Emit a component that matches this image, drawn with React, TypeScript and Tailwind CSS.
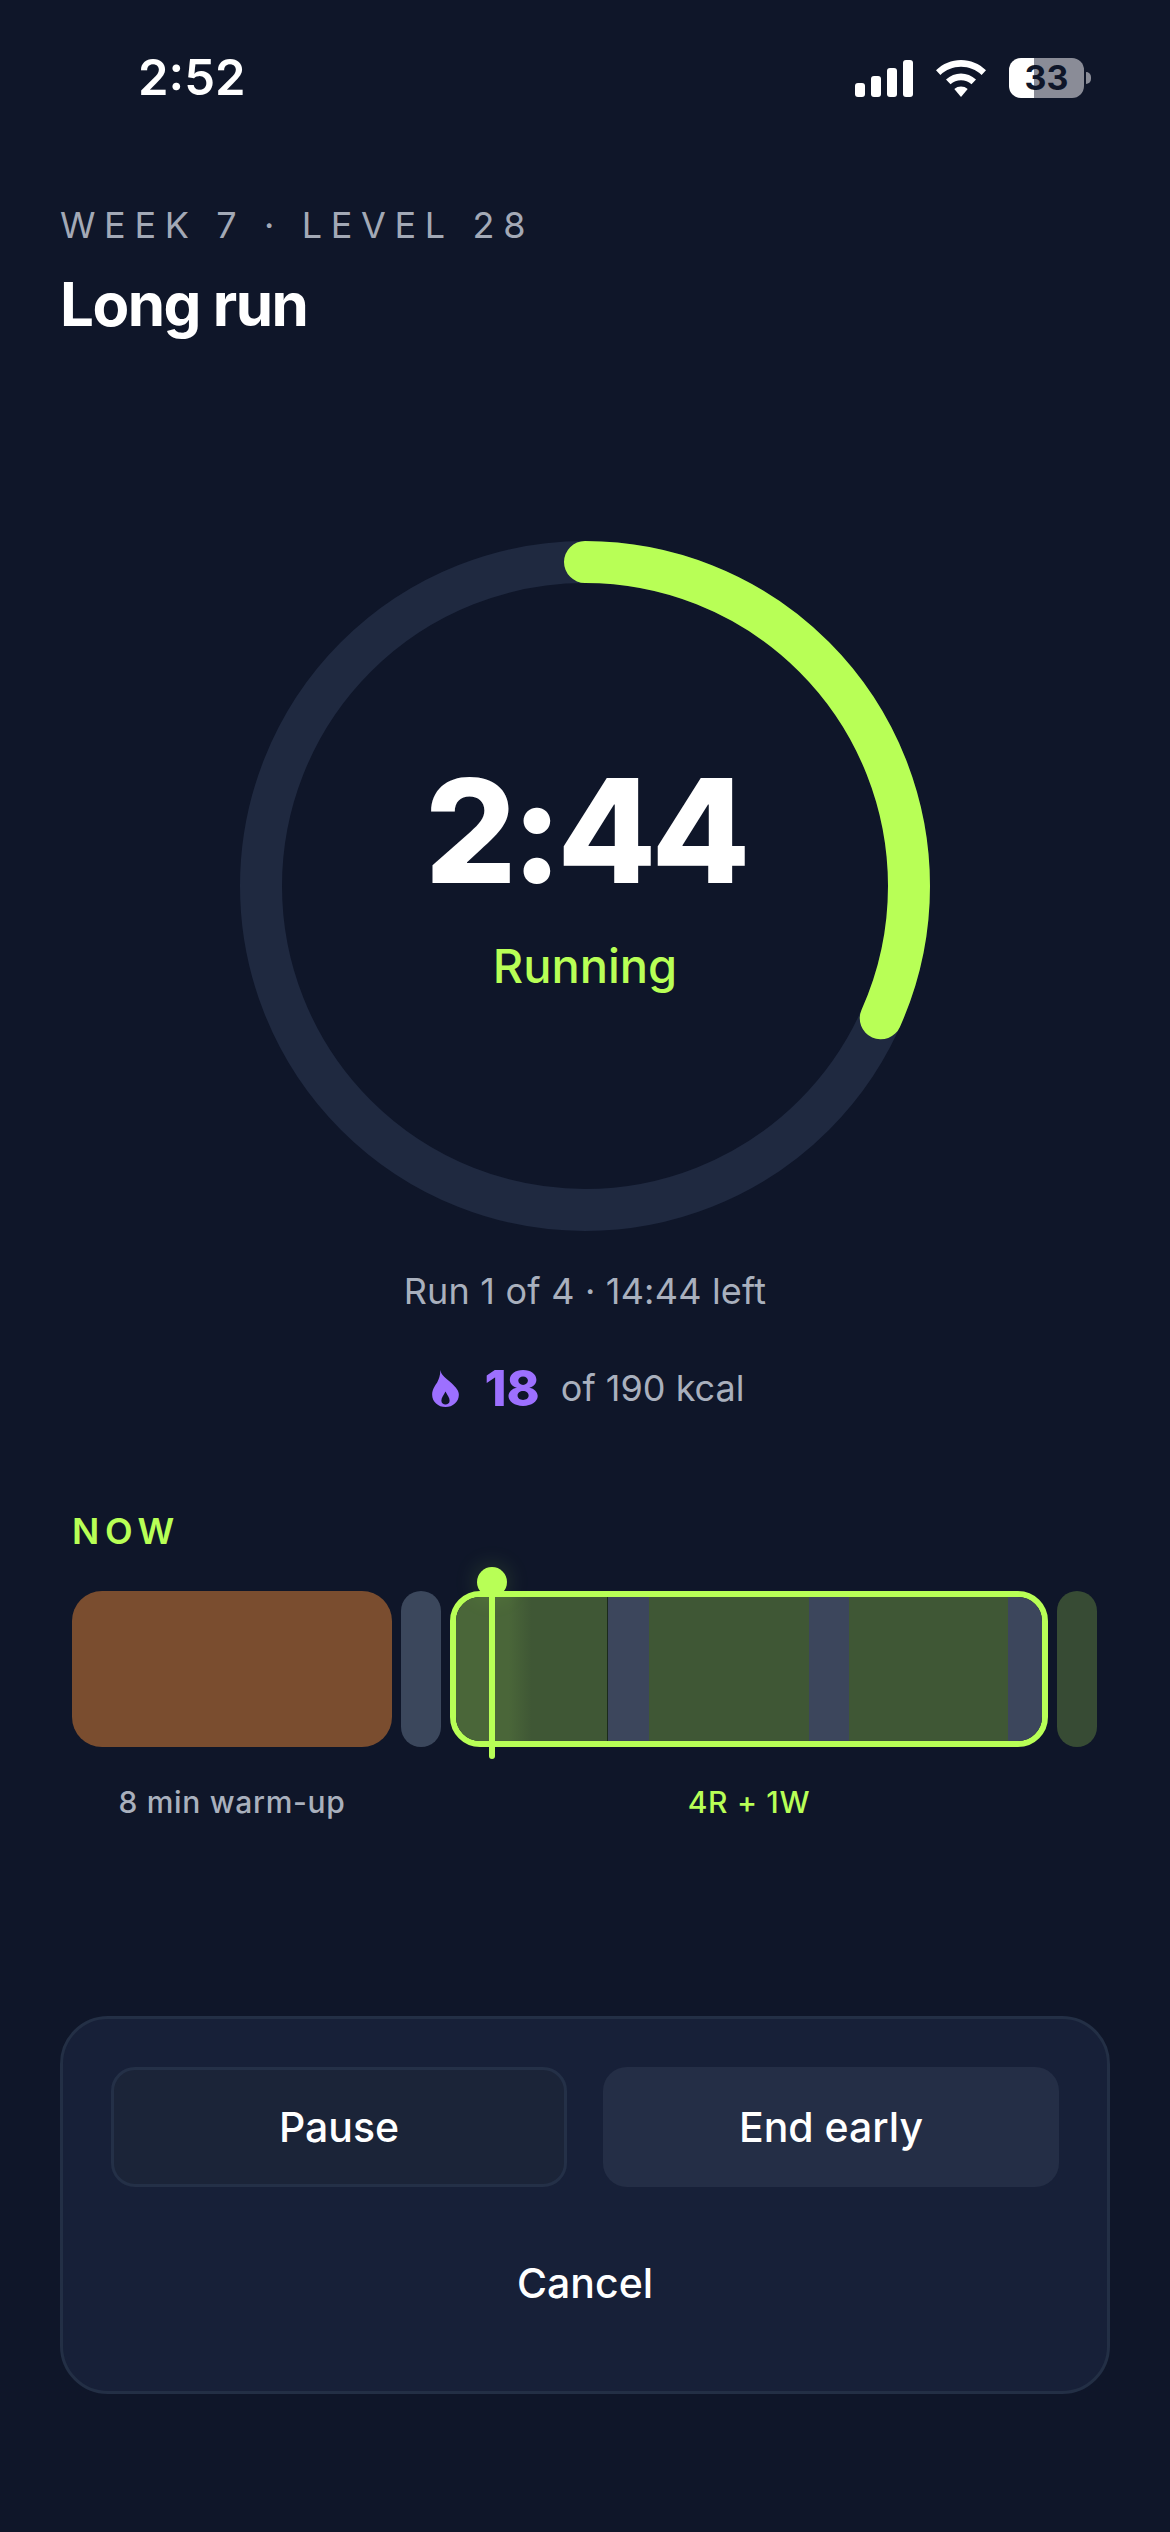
export default function App() {
  return (
    <div className="w-[1170px] h-[2532px] overflow-hidden bg-[#0f1629] text-white font-['Inter',sans-serif]">
      {/* Status bar */}
      <div className="flex h-[156px] items-center justify-between pl-[138px] pr-[79px]">
        <span className="text-[49px] leading-[60px] font-semibold">2:52</span>
        <div className="flex items-center gap-[23px]">
          <svg width="58" height="37" viewBox="0 0 58 37" fill="#fff">
            <rect x="0" y="23" width="10" height="14" rx="3" />
            <rect x="16" y="16" width="10" height="21" rx="3" />
            <rect x="32" y="8" width="10" height="29" rx="3" />
            <rect x="48" y="0" width="10" height="37" rx="3" />
          </svg>
          <svg width="50" height="37" viewBox="0 0 50 37" fill="#fff">
            <path d="M25 0C15.5 0 7 3.700 0 10.200L4.400 15C10 9.800 17 6.800 25 6.800C33 6.800 40 9.800 45.600 15L50 10.200C43 3.700 34.500 0 25 0Z" />
            <path d="M25 13.500C19.500 13.500 14.300 15.600 10 19.500L14.500 24.200C17.500 21.600 21 20.200 25 20.200C29 20.200 32.500 21.600 35.500 24.200L40 19.500C35.700 15.600 30.500 13.500 25 13.500Z" />
            <path d="M25 26.500C22.500 26.500 20.300 27.300 18.300 29L25 37L31.700 29C29.700 27.300 27.500 26.500 25 26.500Z" />
          </svg>
          <div className="flex items-center gap-[2px]">
            <div className="flex h-[40px] w-[75px] items-center justify-center rounded-[12px] bg-[linear-gradient(90deg,#ffffff_33.3%,#8a8c97_33.3%)] text-[34px] leading-[40px] font-bold text-[#0f1629]">
              33
            </div>
            <div className="h-[12px] w-[5px] rounded-r-full bg-[#8a8c97]" />
          </div>
        </div>
      </div>

      {/* Header */}
      <div className="px-[60px]">
        <p className="mt-[45px] text-[36px] leading-[48px] tracking-[0.24em] text-[#a3a9b6]">WEEK 7 · LEVEL 28</p>
        <h1 className="mt-[21px] text-[60px] leading-[68px] font-bold tracking-[-0.025em]">Long run</h1>
      </div>

      {/* Ring */}
      <div className="mt-[203px] grid h-[690px] w-full justify-center">
        <svg className="[grid-area:1/1]" width="690" height="690" viewBox="0 0 690 690" fill="none">
          <circle cx="345" cy="345" r="324" stroke="#1f2940" strokeWidth="42" />
          <circle
            cx="345"
            cy="345"
            r="324"
            stroke="#b8ff56"
            strokeWidth="42"
            strokeLinecap="round"
            pathLength="100"
            strokeDasharray="31.7 100"
            transform="rotate(-90 345 345)"
          />
        </svg>
        <div className="[grid-area:1/1] flex flex-col items-center pt-[204px]">
          <span className="text-[144px] leading-[172px] font-extrabold tracking-[-0.035em]">2:44</span>
          <span className="mt-[19px] text-[47px] leading-[60px] font-medium text-[#b8ff56]">Running</span>
        </div>
      </div>

      {/* Stats */}
      <p className="mt-[36px] text-center text-[36px] leading-[48px] tracking-[0.2px] text-[#a9b0bd]">Run 1 of 4 · 14:44 left</p>
      <div className="mt-[43px] flex h-[60px] items-center justify-center pl-[6px]">
        <svg width="27" height="37" viewBox="0 0 26 36" fill="#9d70ff" fillRule="evenodd">
          <path d="M8 0C9 6 14 8 19 13C23 17 26 20 26 24C26 31 20 36 13 36C6 36 0 31 0 24C0 19 3 15 5 12C6.500 9 8 5 8 0ZM13 21C11 25 9 27 9 30C9 32.500 11 33.500 13 33.500C15 33.500 17 32.500 17 30C17 27 15 25 13 21Z" />
        </svg>
        <span className="ml-[26px] text-[50px] leading-[60px] font-extrabold text-[#9d70ff]">18</span>
        <span className="ml-[21px] text-[36px] leading-[48px] text-[#a9b0bd]">of 190 kcal</span>
      </div>

      {/* Timeline */}
      <div className="mt-[89px] px-[72px]">
        <p className="text-[36px] leading-[48px] font-semibold tracking-[0.155em] text-[#b8ff56]">NOW</p>
        <div className="mt-[36px] flex h-[156px] gap-[9px]">
          <div className="w-[320px] rounded-[30px] bg-[#7a4d2f]" />
          <div className="w-[40px] rounded-[20px] bg-[#3b475c]" />
          <div className="relative w-[598px] rounded-[30px] border-[6px] border-[#b8ff56]">
            <div className="flex h-full overflow-hidden rounded-[24px]">
              <div className="w-[152px] border-r border-[#1a2a1c] bg-[linear-gradient(90deg,#4a6639_0%,#4a6639_35%,#3f5735_50%,#3f5735_100%)]" />
              <div className="w-[41px] bg-[#3c465c]" />
              <div className="w-[160px] bg-[#3f5735]" />
              <div className="w-[40px] bg-[#3c465c]" />
              <div className="w-[159px] bg-[#3f5735]" />
              <div className="flex-1 bg-[#3c465c]" />
            </div>
            <div className="absolute left-[21px] top-[-30px] flex h-[192px] w-[30px] flex-col items-center">
              <div className="h-[30px] w-[30px] rounded-full bg-[#b8ff56] shadow-[0_0_24px_rgba(184,255,86,0.18)]" />
              <div className="-mt-[1px] w-[6px] flex-1 rounded-b-full bg-[#b8ff56]" />
            </div>
          </div>
          <div className="w-[40px] rounded-[20px] bg-[#374b34]" />
        </div>
        <div className="mt-[35px] flex h-[40px] gap-[9px] text-[30px] leading-[40px] font-medium tracking-[0.7px]">
          <span className="w-[320px] text-center text-[#a9b0bd]">8 min warm-up</span>
          <span className="w-[40px]" />
          <span className="w-[598px] text-center text-[#b8ff56]">4R + 1W</span>
        </div>
      </div>

      {/* Actions */}
      <div className="mx-[60px] mt-[194px] h-[378px] rounded-[48px] border-[3px] border-[#232f45] bg-[#172038] p-[48px] text-[41px] leading-[54px] font-medium">
        <div className="flex gap-[36px]">
          <button className="flex h-[120px] w-[456px] items-center justify-center rounded-[24px] border-[3px] border-[#243047] bg-[#1b2438]">
            Pause
          </button>
          <button className="flex h-[120px] w-[456px] items-center justify-center rounded-[24px] bg-[#242e46]">
            End early
          </button>
        </div>
        <button className="mt-[36px] flex h-[120px] w-full items-center justify-center">Cancel</button>
      </div>
    </div>
  )
}
